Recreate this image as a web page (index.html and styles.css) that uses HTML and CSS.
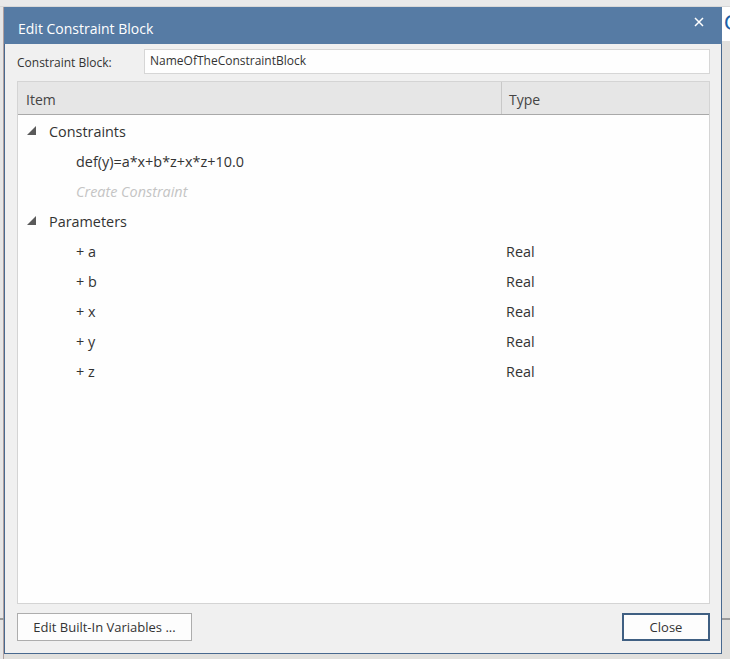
FILE: index.html
```html
<!DOCTYPE html>
<html>
<head>
<meta charset="utf-8">
<link rel="stylesheet" href="styles.css">
</head>
<body>
<div class="desk">
  <div class="bg-top"></div>
  <div class="bg-left"></div>
  <div class="bg-right"><span class="bg-glyph">C</span></div>
  <div class="bg-line-left"></div>
  <div class="bg-line-right"></div>
  <div class="dialog">
    <div class="titlebar">
      <span class="title">Edit Constraint Block</span>
      <svg class="close-x" width="10" height="10" viewBox="0 0 10 10"><path d="M1 1L9 9M9 1L1 9" stroke="#fff" stroke-width="1.5"/></svg>
    </div>
    <div class="content">
      <div class="form-row">
        <label class="label">Constraint Block:</label>
        <div class="input">NameOfTheConstraintBlock</div>
      </div>
      <div class="panel">
        <div class="header">
          <div class="hcol hcol-item">Item</div>
          <div class="hcol hcol-type">Type</div>
        </div>
        <div class="tree">
          <div class="row group"><svg class="tri" width="9" height="9" viewBox="0 0 9 9"><polygon points="9,0 9,9 0,9" fill="#5a5a5a"/></svg><span>Constraints</span></div>
          <div class="row child"><span>def(y)=a*x+b*z+x*z+10.0</span></div>
          <div class="row child placeholder"><span>Create Constraint</span></div>
          <div class="row group"><svg class="tri" width="9" height="9" viewBox="0 0 9 9"><polygon points="9,0 9,9 0,9" fill="#5a5a5a"/></svg><span>Parameters</span></div>
          <div class="row child"><span class="name">+ a</span><span class="type">Real</span></div>
          <div class="row child"><span class="name">+ b</span><span class="type">Real</span></div>
          <div class="row child"><span class="name">+ x</span><span class="type">Real</span></div>
          <div class="row child"><span class="name">+ y</span><span class="type">Real</span></div>
          <div class="row child"><span class="name">+ z</span><span class="type">Real</span></div>
        </div>
      </div>
      <div class="buttons">
        <button class="btn btn-vars">Edit Built-In Variables ...</button>
        <button class="btn btn-close">Close</button>
      </div>
    </div>
  </div>
</div>
</body>
</html>
```
FILE: styles.css
```css
html, body {
  margin: 0;
  padding: 0;
}
body {
  width: 730px;
  height: 659px;
  overflow: hidden;
  background: #e1e0dd;
  font-family: "Open Sans", "Noto Sans", sans-serif;
}
.desk {
  position: relative;
  width: 730px;
  height: 659px;
  padding: 7px 8px 5px 4px;
  box-sizing: border-box;
}
.bg-top {
  position: absolute;
  left: 0;
  top: 0;
  width: 730px;
  height: 7px;
  background: #e9e9e9;
  border-bottom: 1px solid #d8d8d8;
  box-sizing: border-box;
}
.bg-left {
  position: absolute;
  left: 0;
  top: 7px;
  width: 4px;
  height: 652px;
  background: #e6e6e6;
  border-right: 1px solid #b0a0a0;
  box-sizing: border-box;
}
.bg-right {
  position: absolute;
  left: 722px;
  top: 7px;
  width: 8px;
  height: 34px;
  background: #ffffff;
  overflow: hidden;
}
.bg-glyph {
  position: absolute;
  left: 2px;
  top: 3px;
  font-size: 22px;
  color: #1d5fa8;
  font-family: "Liberation Sans", sans-serif;
}
.bg-line-left {
  position: absolute;
  left: 0;
  top: 618px;
  width: 4px;
  height: 2px;
  background: #9a9a9a;
}
.bg-line-right {
  position: absolute;
  left: 722px;
  top: 618px;
  width: 8px;
  height: 2px;
  background: #9a9a9a;
}
.dialog {
  position: relative;
  width: 718px;
  height: 647px;
  box-sizing: border-box;
  border: 1px solid #48698f;
  border-top: none;
  background: #f0f0f0;
  display: flex;
  flex-direction: column;
}
.titlebar {
  height: 37px;
  background: #567ba4;
  margin: 0 -1px;
  display: flex;
  align-items: center;
  justify-content: space-between;
  padding: 0 18px 0 14px;
  flex-shrink: 0;
}
.title {
  color: #ffffff;
  font-size: 14px;
  margin-top: 6px;
}
.close-x {
  margin-top: -8px;
}
.content {
  flex: 1;
  display: flex;
  flex-direction: column;
  padding: 5px 11px 11px 12px;
}
.form-row {
  display: flex;
  align-items: center;
  height: 25px;
}
.label {
  width: 127px;
  font-size: 12px;
  color: #333;
  margin-top: 2px;
}
.input {
  flex: 1;
  height: 25px;
  box-sizing: border-box;
  border: 1px solid #d6d6d6;
  background: #fefefe;
  font-size: 12px;
  color: #333;
  padding: 2px 0 0 5px;
}
.panel {
  margin-top: 7px;
  height: 523px;
  box-sizing: border-box;
  border: 1px solid #d4d4d4;
  background: #fefefe;
  display: flex;
  flex-direction: column;
}
.header {
  display: flex;
  height: 33px;
  background: #e6e6e6;
  border-bottom: 1px solid #a9a9a9;
  box-sizing: border-box;
  flex-shrink: 0;
}
.hcol {
  font-size: 14px;
  color: #444;
  display: flex;
  align-items: center;
  padding-left: 8px;
  padding-top: 2px;
}
.hcol-item {
  width: 475px;
  border-right: 1px solid #c8c8c8;
}
.hcol-type {
  flex: 1;
  padding-left: 7px;
}
.tree {
  padding-top: 1px;
}
.row {
  height: 30px;
  display: flex;
  align-items: center;
  font-size: 14.4px;
  color: #333;
}
.group {
  padding-left: 9px;
}
.group .tri {
  margin-right: 13px;
  margin-top: -2px;
}
.child {
  padding-left: 58px;
}
.placeholder {
  color: #c4c4c4;
  font-style: italic;
}
.name {
  width: 430px;
}
.buttons {
  margin-top: 9px;
  display: flex;
  justify-content: space-between;
}
.btn {
  height: 28px;
  box-sizing: border-box;
  font-family: "Open Sans", "Noto Sans", sans-serif;
  font-size: 13px;
  color: #333;
  background: #fdfdfd;
  padding: 0;
}
.btn-vars {
  width: 175px;
  border: 1px solid #adadad;
}
.btn-close {
  width: 88px;
  border: 1px solid #3f5f82;
  box-shadow: inset 0 0 0 1px #3f5f82;
}
```
